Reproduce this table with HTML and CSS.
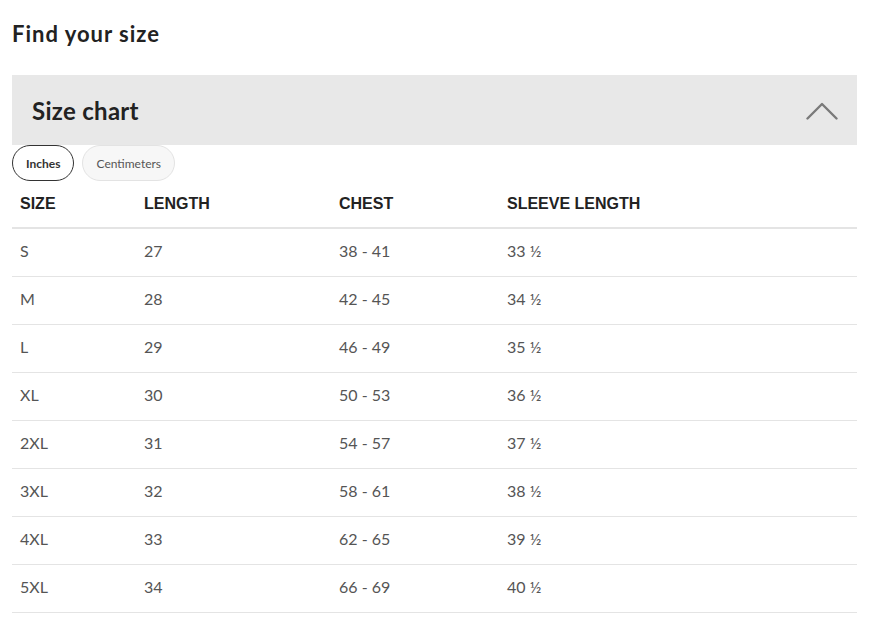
FILE: index.html
```html
<!DOCTYPE html>
<html>
<head>
<meta charset="utf-8">
<link rel="stylesheet" href="styles.css">
</head>
<body>
<div class="page">
  <h2 class="title">Find your size</h2>
  <div class="panel-head">
    <span class="panel-title">Size chart</span>
    <svg class="chev" width="32" height="18" viewBox="0 0 32 18"><path d="M1.5 16.5 L16 2 L30.5 16.5" fill="none" stroke="#7a7a7a" stroke-width="2.4" stroke-linecap="round" stroke-linejoin="round"/></svg>
  </div>
  <div class="units">
    <button class="unit active">Inches</button>
    <button class="unit">Centimeters</button>
  </div>
  <table class="chart">
    <colgroup><col class="c1"><col class="c2"><col class="c3"><col class="c4"></colgroup>
    <thead>
      <tr><th>SIZE</th><th>LENGTH</th><th>CHEST</th><th>SLEEVE LENGTH</th></tr>
    </thead>
    <tbody>
      <tr><td>S</td><td>27</td><td>38 - 41</td><td>33 ½</td></tr>
      <tr><td>M</td><td>28</td><td>42 - 45</td><td>34 ½</td></tr>
      <tr><td>L</td><td>29</td><td>46 - 49</td><td>35 ½</td></tr>
      <tr><td>XL</td><td>30</td><td>50 - 53</td><td>36 ½</td></tr>
      <tr><td>2XL</td><td>31</td><td>54 - 57</td><td>37 ½</td></tr>
      <tr><td>3XL</td><td>32</td><td>58 - 61</td><td>38 ½</td></tr>
      <tr><td>4XL</td><td>33</td><td>62 - 65</td><td>39 ½</td></tr>
      <tr><td>5XL</td><td>34</td><td>66 - 69</td><td>40 ½</td></tr>
    </tbody>
  </table>
</div>
</body>
</html>
```
FILE: styles.css
```css
html, body { margin: 0; padding: 0; background: #fff; }
body { font-family: Lato, "Open Sans", sans-serif; color: #222; }
.page { padding: 0 12px; }
.title {
  margin: 0;
  padding-top: 20px;
  font-size: 22px;
  line-height: 28px;
  font-weight: 700;
  letter-spacing: 1px;
  color: #222;
}
.panel-head {
  margin-top: 27px;
  height: 70px;
  background: #e8e8e8;
  display: flex;
  align-items: center;
  justify-content: space-between;
  padding: 0 19px 0 20px;
}
.panel-title { font-size: 24px; font-weight: 700; color: #222; letter-spacing: 0.3px; }
.chev { display: block; margin-top: 2px; }
.units { display: flex; gap: 8px; height: 36px; }
.unit {
  font-family: Lato, "Open Sans", sans-serif;
  font-size: 12px;
  height: 36px;
  border-radius: 18px;
  padding: 0 13px;
  border: 1px solid #e3e3e3;
  background: #f7f7f7;
  color: #555;
  cursor: pointer;
}
.unit.active { border-color: #333; background: #fff; color: #333; font-weight: 700; }
.chart { width: 100%; border-collapse: collapse; }
.c1 { width: 124px; }
.c2 { width: 195px; }
.c3 { width: 168px; }
th {
  font-family: "Liberation Sans", Arial, sans-serif;
  font-weight: 700;
  font-size: 16px;
  color: #222;
  text-align: left;
  height: 46px;
  padding: 0 8px;
  border-bottom: 2px solid #e4e4e4;
}
td {
  font-size: 16px;
  color: #555;
  height: 48px;
  padding: 0 8px 3px;
  box-sizing: border-box;
  border-bottom: 1px solid #e4e4e4;
}
```
